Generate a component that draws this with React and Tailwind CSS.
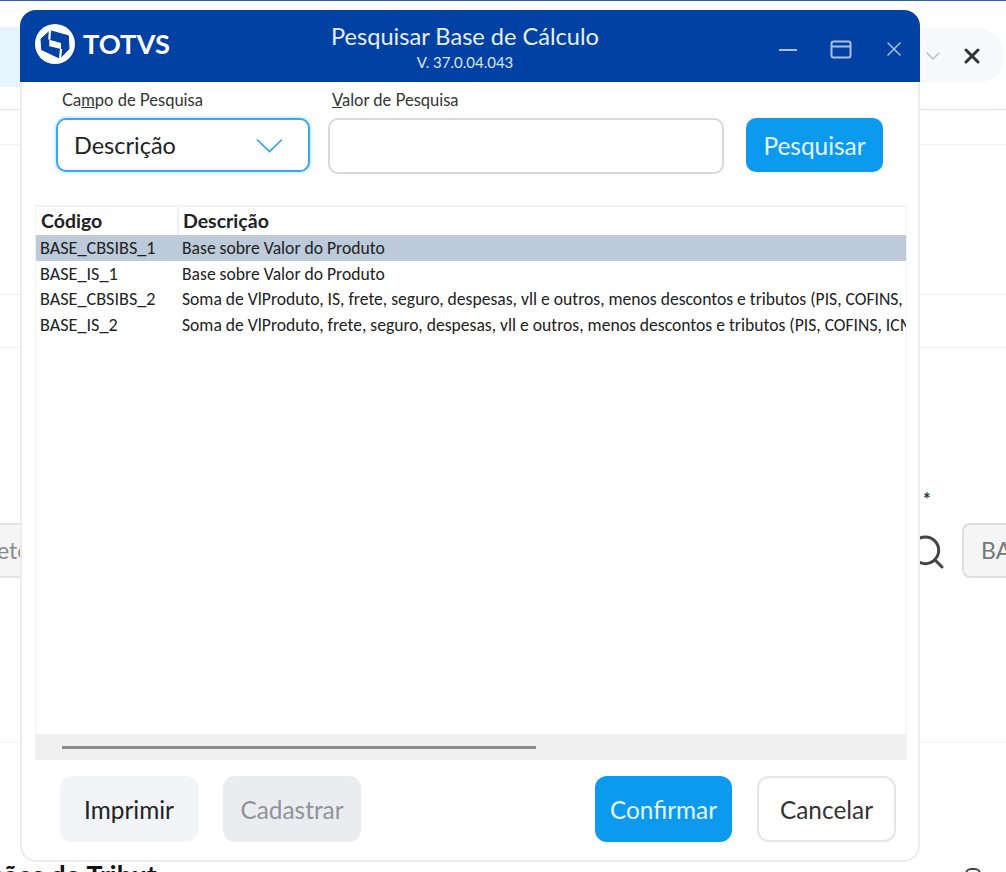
import { Search, X, ChevronDown } from "lucide-react"

const rows = [
  { code: "BASE_CBSIBS_1", desc: "Base sobre Valor do Produto", selected: true },
  { code: "BASE_IS_1", desc: "Base sobre Valor do Produto" },
  {
    code: "BASE_CBSIBS_2",
    desc: "Soma de VlProduto, IS, frete, seguro, despesas, vll e outros, menos descontos e tributos (PIS, COFINS, ICMS)",
  },
  {
    code: "BASE_IS_2",
    desc: "Soma de VlProduto, frete, seguro, despesas, vll e outros, menos descontos e tributos (PIS, COFINS, ICMS)",
  },
]

const Logo = () => (
  <svg width="40" height="40" viewBox="0 0 40 40" className="shrink-0">
    <circle cx="20" cy="20" r="20" fill="white" />
    <path d="M6 15 L15 6.7 L33.3 11.7 L34 25 L25 34.3 L6.7 25.7 Z" fill="#0041a3" strokeLinejoin="round" stroke="#0041a3" strokeWidth="1" />
    <path d="M14.3 15.7 L26 19 L26 25 L14.3 22.3 Z" fill="white" />
    <path d="M14.3 15.7 L15 5.5 M26 25 L25 35.5" stroke="white" strokeWidth="2.2" />
  </svg>
)

const Background = () => (
  <div className="absolute inset-0 overflow-hidden font-['Lato',sans-serif]">
    <div className="h-[1px] bg-[#2b62b5]" />
    <div className="absolute left-0 top-[27px] h-[60px] w-[20px] bg-[#e6f4fd]" />
    <div className="absolute left-[920px] top-[28px] flex h-[55px] w-[84px] items-center rounded-r-[26px] bg-[#f8f9fb] pl-[1px]">
      <ChevronDown size={24} strokeWidth={1.5} className="text-[#bdbdbd]" />
      <X size={24} strokeWidth={3} className="ml-[15px] text-[#333333]" />
    </div>
    <div className="absolute left-0 right-0 top-[109px] h-[1px] bg-[#dfe2ea]" />
    <div className="absolute left-0 right-0 top-[144px] h-[1px] bg-[#f1f2f5]" />
    <div className="absolute left-0 right-0 top-[294px] h-[1px] bg-[#eceef2]" />
    <div className="absolute left-0 right-0 top-[347px] h-[1px] bg-[#eceef2]" />
    <div className="absolute left-0 right-0 top-[742px] h-[1px] bg-[#f1f2f5]" />
    <div className="absolute left-[-60px] top-[523px] flex h-[55px] w-[120px] items-center rounded-lg border-2 border-[#e2e2e2] bg-[#f5f5f5] pl-[55px] text-[23px] text-[#8a8a8a]">
      ete
    </div>
    <div className="absolute left-[923px] top-[486px] text-[18px] font-bold text-[#333333]">*</div>
    <Search size={40} strokeWidth={1.8} className="absolute left-[907px] top-[532px] text-[#444444]" />
    <div className="absolute left-[962px] top-[523px] flex h-[55px] w-[80px] items-center rounded-lg border-2 border-[#dedede] bg-[#f5f5f5] pl-[17px] text-[23px] text-[#777777]">
      BASE
    </div>
    <div className="absolute left-[-10px] top-[855px] text-[26.7px] font-bold text-[#111111]">ções do Tribut</div>
    <div className="absolute left-[965px] top-[868px] h-[12px] w-[16px] rounded-full border-2 border-[#444444]" />
  </div>
)

const FooterButton = ({ className, children }) => (
  <button className={`flex h-[66px] items-center justify-center rounded-xl pt-[2px] text-[24.4px] ${className}`}>
    {children}
  </button>
)

export default function App() {
  return (
    <div className="relative h-[872px] w-[1006px] overflow-hidden bg-white">
      <Background />

      <div className="relative ml-[20px] mt-[10px] flex h-[852px] w-[900px] flex-col overflow-hidden rounded-2xl font-['Lato',sans-serif]">
        <header className="relative flex h-[72px] shrink-0 items-start bg-[#0041a3] text-white">
          <div className="ml-[15px] mt-[14px] flex items-center gap-[8px]">
            <Logo />
            <span className="text-[27.3px] font-bold leading-none">TOTVS</span>
          </div>
          <div className="absolute left-0 right-[10px] top-[13px] text-center">
            <div className="text-[23.6px] leading-[26px] text-[#e8eef8]">Pesquisar Base de Cálculo</div>
            <div className="mt-[3px] text-[15px] leading-[20px] text-[#dbe5f5]">V. 37.0.04.043</div>
          </div>
          <div className="relative ml-auto mr-[14px] mt-[28px] flex items-center gap-[28px] text-[#a9c0e4]">
            <svg width="24" height="24" viewBox="0 0 24 24" fill="none" stroke="currentColor" strokeWidth="2" className="mr-[1px]">
              <path d="M3 12H21" />
            </svg>
            <svg width="24" height="24" viewBox="0 0 24 24" fill="none" stroke="currentColor" strokeWidth="2">
              <rect x="2.5" y="3.5" width="19" height="16" rx="2" />
              <path d="M2.5 8.5H21.5" />
            </svg>
            <X size={24} strokeWidth={1.5} className="-mt-[2px] ml-[1px]" />
          </div>
        </header>

        <div className="flex flex-1 flex-col rounded-b-2xl border-x-2 border-b-2 border-[#ececec] bg-white">
          <div className="mt-[9px] flex pl-[34px]">
            <div className="w-[254px]">
              <div className="ml-[6px] h-[18px] text-[16.5px] leading-[18px] text-[#333333]">
                Ca<span className="underline">m</span>po de Pesquisa
              </div>
              <div className="mt-[9px] flex h-[54px] items-center justify-between rounded-[10px] border-2 border-[#38a7f0] bg-white pl-[16px] pr-[25px] shadow-[0_0_4px_#9fd6fa]">
                <span className="pt-[2px] text-[23.5px] text-[#222222]">Descrição</span>
                <svg width="27" height="15" viewBox="0 0 27 15" fill="none" stroke="#2f9fe8" strokeWidth="1.7">
                  <path d="M1 1.5 L13.5 13.5 L26 1.5" />
                </svg>
              </div>
            </div>
            <div className="ml-[18px] w-[396px]">
              <div className="ml-[4px] h-[18px] text-[16.5px] leading-[18px] text-[#333333]">
                <span className="underline">V</span>alor de Pesquisa
              </div>
              <div className="mt-[9px] h-[56px] rounded-[10px] border-2 border-[#d9d9d9] bg-white" />
            </div>
            <button className="ml-[22px] mt-[27px] h-[54px] w-[137px] rounded-[10px] bg-[#0c9aee] pt-[2px] text-[24.4px] text-[#e6f5fe]">
              Pesquisar
            </button>
          </div>

          <div className="ml-[13px] mt-[31px] flex h-[555px] w-[872px] flex-col border-x border-t-2 border-[#f3f3f3] bg-white text-[#222222]">
            <div className="flex h-[28px] shrink-0 text-[19.5px] font-bold leading-[28px]">
              <div className="w-[143px] border-r-2 border-[#f0f0f0] pl-[5px]">Código</div>
              <div className="pl-[4px]">Descrição</div>
            </div>
            <div className="flex-1 overflow-hidden font-['Carlito','Lato',sans-serif] text-[17.6px] leading-[25.7px]">
              {rows.map((row) => (
                <div
                  key={row.code}
                  className={`flex h-[25.7px] whitespace-nowrap ${row.selected ? "bg-[#bccad9]" : ""}`}
                >
                  <div className="w-[144px] shrink-0 pl-[4px] pt-[1px] text-[18.2px]">{row.code}</div>
                  <div className="overflow-hidden pl-[2px] pt-[1px]">{row.desc}</div>
                </div>
              ))}
            </div>
            <div className="flex h-[26px] shrink-0 items-center bg-[#f0f0f0] pl-[26px]">
              <div className="h-[3px] w-[474px] bg-[#8c8c8c]" />
            </div>
          </div>

          <div className="mt-[16px] flex pl-[38px]">
            <FooterButton className="w-[138px] bg-[#f3f4f8] text-[#222222]">Imprimir</FooterButton>
            <FooterButton className="ml-[25px] w-[138px] bg-[#ebecf0] text-[#909399]">Cadastrar</FooterButton>
            <FooterButton className="ml-[234px] w-[137px] bg-[#0c9aee] text-[#e6f5fe]">Confirmar</FooterButton>
            <FooterButton className="ml-[25px] w-[139px] border-2 border-[#e4e5ea] bg-white text-[#333333]">
              Cancelar
            </FooterButton>
          </div>
        </div>
      </div>
    </div>
  )
}
